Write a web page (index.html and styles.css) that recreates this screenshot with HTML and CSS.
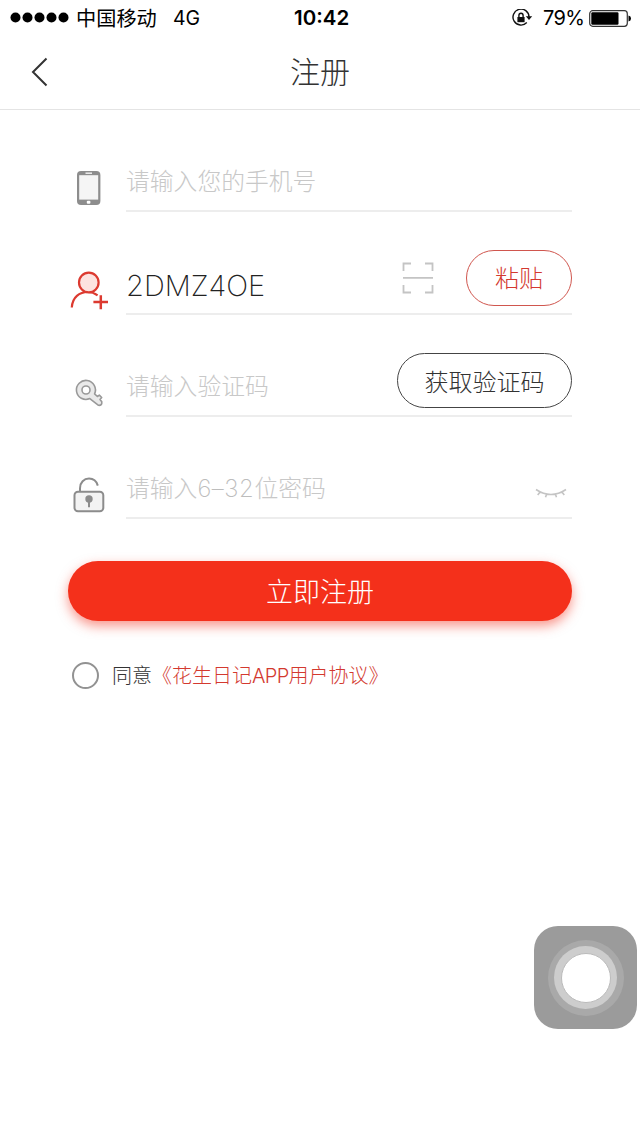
FILE: index.html
```html
<!DOCTYPE html>
<html lang="zh-CN">
<head>
<meta charset="utf-8">
<title>注册</title>
<link rel="stylesheet" href="styles.css">
</head>
<body>
<div class="status">
  <svg class="signal" width="60" height="12" viewBox="0 0 60 12"><circle cx="5.5" cy="5.500" r="5"/><circle cx="17.5" cy="5.500" r="5"/><circle cx="29.5" cy="5.500" r="5"/><circle cx="41.5" cy="5.500" r="5"/><circle cx="53.5" cy="5.500" r="5"/></svg>
  <span class="carrier">中国移动</span>
  <span class="network">4G</span>
  <span class="time">10:42</span>
  <svg class="rotation" width="21" height="18" viewBox="0 0 21 18" fill="none" stroke="#111" stroke-width="1.4"><path d="M14.8 13.6A8 8 0 1 1 17 8"/><path d="M13.8 7.2h6.4L17 11z" fill="#111" stroke="none"/><rect x="5.4" y="8" width="7.2" height="5.2" fill="#111" stroke="none"/><path d="M6.9 8V6.6a2.1 2.3 0 0 1 4.2 0V8"/></svg>
  <span class="percent">79%</span>
  <svg class="battery" width="43" height="17" viewBox="0 0 43 17"><rect x=".7" y=".7" width="37.6" height="15.6" rx="3" fill="none" stroke="#333" stroke-width="1.2"/><rect x="2.3" y="2.3" width="27.2" height="12.4" rx="1.2"/><path d="M39.5 5.5q2.5.6 2.5 3t-2.5 3z"/></svg>
</div>
<header class="nav">
  <svg class="back" width="18" height="30" viewBox="0 0 18 30" fill="none" stroke="#333" stroke-width="2"><path d="M16.500 1.5L3 15l13.500 13.5"/></svg>
  <h1>注册</h1>
</header>
<main class="form">
  <div class="row">
    <svg class="icon" width="42" height="42" viewBox="0 0 42 42"><rect x="9" y="4" width="23.4" height="34" rx="4" fill="#8d8d8d"/><rect x="11.2" y="8.2" width="19" height="24.4" fill="#f5f5f5"/><path d="M17.5 6.2h6.5" stroke="#eee" stroke-width="1.5"/><rect x="18.8" y="33.8" width="3.6" height="3" rx="1" fill="#fff"/></svg>
    <div class="field"><span class="hint">请输入您的手机号</span></div>
  </div>
  <div class="row">
    <svg class="icon" width="42" height="42" viewBox="0 0 42 42" fill="none" stroke="#dc3a30" stroke-width="2.2"><path d="M3.8 38.500C4.3 28 11.5 23 20 23q5 0 9.6 3.400"/><circle cx="20.8" cy="13.500" r="9.8" fill="#fde3e0"/><path d="M25.4 33H40M32.8 26.300v14" stroke-width="2.5"/></svg>
    <div class="field">
      <span class="value">2DMZ4OE</span>
      <svg class="scan" width="32" height="32" viewBox="0 0 32 32" fill="none" stroke="#c4c4c4" stroke-width="1.8"><path d="M1.5 9V1.5H9M23 1.5h7.5V9M1.5 23v7.5H9M23 30.5h7.5V23M1 15.8h30"/></svg>
      <button class="pill paste">粘贴</button>
    </div>
  </div>
  <div class="row">
    <svg class="icon" width="42" height="42" viewBox="0 0 42 42" fill="#e9e9e9" stroke="#999" stroke-width="1.6" stroke-linejoin="round"><path d="M26.600 21.800L29.400 24.500l1.900-1.300 2.400 2.300-1.700 2 1.800 2.300q.4 3.900-3.300 3.500L21.800 26.600A9.500 9.500 0 1 1 26.600 21.800z"/><circle cx="18" cy="18" r="4" fill="#fff"/></svg>
    <div class="field">
      <span class="hint">请输入验证码</span>
      <button class="pill code">获取验证码</button>
    </div>
  </div>
  <div class="row">
    <svg class="icon" width="42" height="42" viewBox="0 0 42 42" fill="none" stroke="#8c8c8c" stroke-width="2"><rect x="6.5" y="17.8" width="28.8" height="19.5" rx="3.5" fill="#f3f3f3"/><path d="M12 17.2v-3c0-5.7 4-9.6 9-9.6 4.500 0 7.500 2.600 8.800 7"/><circle cx="21" cy="25" r="3.7" fill="#8c8c8c" stroke="none"/><path d="M21 25v8.200"/></svg>
    <div class="field">
      <span class="hint">请输入<span class="digits">6–32</span>位密码</span>
      <svg class="eye" width="32" height="14" viewBox="0 0 32 14" fill="none" stroke="#c4c4c4" stroke-width="1.600"><path d="M1 2.500q15 10 30 0M4.700 5.500l-2 2.500M11.500 7.500l-1 2.800M20.500 7.500l1 2.800M27.300 5.500l2 2.500"/></svg>
    </div>
  </div>
  <button class="submit">立即注册</button>
  <div class="agree"><span class="radio"></span><span>同意</span><a class="terms">《花生日记<span class="app">APP</span>用户协议》</a></div>
</main>
<div class="assistive"><div class="ring"><div class="inner"><div class="dot"></div></div></div></div>
</body>
</html>
```

FILE: styles.css
```css
* { box-sizing: border-box; }
body {
  margin: 0;
  height: 1138px;
  position: relative;
  overflow: hidden;
  background: #fff;
  color: #333;
  font-family: Inter, "Noto Sans CJK SC", sans-serif;
  font-weight: 300;
}
svg { display: block; flex: none; }
button { font: inherit; padding: 0; }
.status {
  display: flex;
  align-items: center;
  height: 36px;
  padding: 0 8px 0 10px;
  font-size: 20px;
  font-weight: 400;
  line-height: 36px;
  color: #000;
  white-space: nowrap;
}
.carrier { margin-left: 6px; width: 81px; padding-top: 2px; font-size: 20.2px; }
.network { margin-left: 16px; width: 28px; font-size: 19.5px; }
.time { margin-left: 93px; width: 57px; font-weight: 600; font-size: 20.5px; }
.rotation { margin-left: 161px; }
.percent { margin-left: 10px; width: 40px; letter-spacing: -0.7px; }
.battery { margin-left: 6px; }
.nav {
  height: 74px;
  border-bottom: 1px solid #e4e4e4;
  display: grid;
  grid-template-columns: 30px 1fr 30px;
  align-items: center;
  padding: 0 30px 2px;
}
h1 {
  margin: 0;
  font-size: 30px;
  font-weight: 300;
  line-height: 44px;
  text-align: center;
}
.form { padding: 0 68px; }
.row { display: flex; height: 102.3px; }
.icon { margin-top: 57px; }
.field {
  flex: 1;
  display: flex;
  align-items: flex-start;
  margin-left: 16px;
  border-bottom: 2px solid #ededed;
}
.hint {
  margin-top: 54px;
  font-size: 23.8px;
  line-height: 36px;
  font-weight: 300;
  color: #c8c8c8;
  white-space: nowrap;
}
.digits { font-weight: 200; color: #bdbdbd; letter-spacing: .6px; }
.value { margin-top: 56px; font-size: 29px; line-height: 36px; width: 276px; font-weight: 200; color: #222; }
.scan { margin-top: 50px; }
.pill {
  height: 55px;
  margin-top: 38px;
  border: 1px solid #444;
  border-radius: 28px;
  background: #fff;
  color: #333;
  font-size: 24px;
  line-height: 52px;
}
.paste { width: 106px; height: 56px; padding-top: 2px; margin-left: auto; border-color: #d0564e; color: #d3392f; }
.code { width: 175px; padding-top: 3px; margin-left: auto; }
.eye { margin: 70px 5px 0 auto; }
.submit {
  display: block;
  width: 504px;
  height: 60px;
  padding-top: 4px;
  margin-top: 42px;
  border: 0;
  border-radius: 30px;
  background: #f4301b;
  box-shadow: 0 5px 12px rgba(244, 48, 27, .5);
  color: #fff;
  font-size: 27px;
  line-height: 56px;
}
.agree {
  display: flex;
  align-items: center;
  height: 30px;
  margin-top: 39px;
  padding-left: 4px;
  font-size: 20px;
  line-height: 30px;
  white-space: nowrap;
}
.agree > span:nth-child(2), .terms { padding-top: 2px; }
.radio { width: 27px; height: 27px; margin-right: 13px; border: 2px solid #929292; border-radius: 50%; }
.terms { color: #d3392f; font-size: 20px; }
.app { letter-spacing: -.7px; }
.assistive {
  position: absolute;
  left: 534px;
  top: 926px;
  width: 103px;
  height: 103px;
  border-radius: 24px;
  background: #9b9b9b;
  display: grid;
  place-items: center;
}
.ring, .inner, .dot { border-radius: 50%; display: grid; place-items: center; }
.ring { width: 76px; height: 76px; background: #a9a9a9; }
.inner { width: 63px; height: 63px; background: #cdcdcd; }
.dot { width: 50px; height: 50px; background: #fff; border: 1px solid #bbb; }
```
